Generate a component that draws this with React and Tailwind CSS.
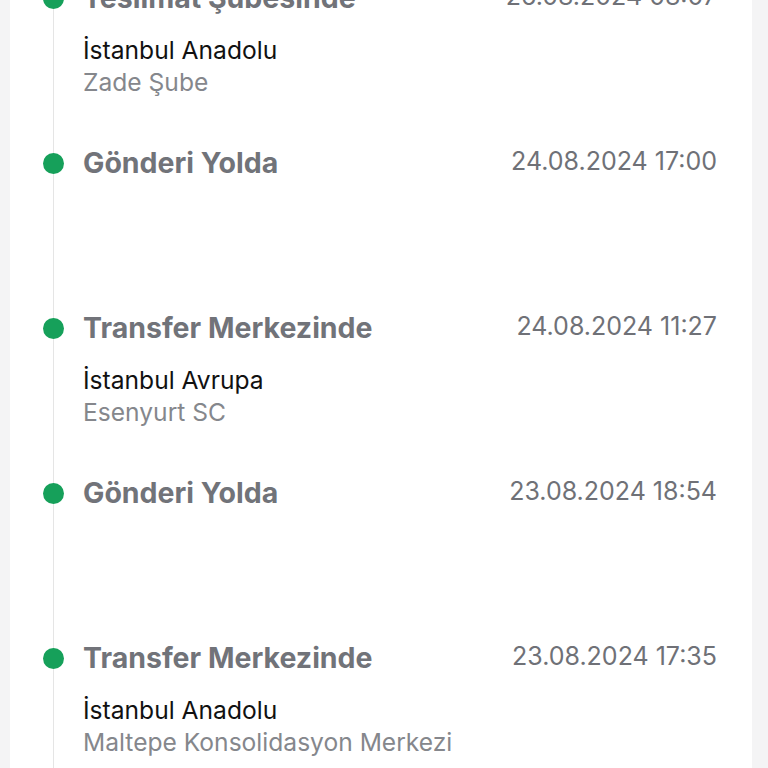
const events = [
  { title: "Teslimat Şubesinde", date: "26.08.2024 08:07", city: "İstanbul Anadolu", branch: "Zade Şube" },
  { title: "Gönderi Yolda", date: "24.08.2024 17:00" },
  { title: "Transfer Merkezinde", date: "24.08.2024 11:27", city: "İstanbul Avrupa", branch: "Esenyurt SC" },
  { title: "Gönderi Yolda", date: "23.08.2024 18:54" },
  { title: "Transfer Merkezinde", date: "23.08.2024 17:35", city: "İstanbul Anadolu", branch: "Maltepe Konsolidasyon Merkezi" },
]

function TimelineItem({ item }) {
  return (
    <li className="relative flex h-[165px]">
      <div className="flex h-8 w-[55px] shrink-0 items-center">
        <span className="relative z-10 ml-[15px] h-[21px] w-[21px] rounded-full bg-[#16a05a]" />
      </div>
      <div className="flex-1">
        <div className="flex items-center justify-between">
          <h3 className="text-[28.5px] font-bold leading-8 text-[#717379]">{item.title}</h3>
          <span className="-mt-1 text-[25px] leading-8 text-[#6f7177]">{item.date}</span>
        </div>
        {item.city && (
          <div className="mt-5 text-[24.6px] leading-8">
            <p className="text-[#111]">{item.city}</p>
            <p className="text-[#85878c]">{item.branch}</p>
          </div>
        )}
      </div>
    </li>
  )
}

export default function App() {
  return (
    <div className="min-h-screen overflow-hidden bg-[#f4f4f5] pl-[10px] pr-[16px] [font-family:Inter,'Noto_Sans',sans-serif]">
      <div className="h-[768px] overflow-hidden bg-white pl-[18px] pr-[35px]">
        <ul className="relative -mt-[18px]">
          <div className="absolute bottom-0 left-[25px] top-0 w-px bg-[#e5e5e5]" />
          {events.map((item, i) => (
            <TimelineItem key={i} item={item} />
          ))}
        </ul>
      </div>
    </div>
  )
}
